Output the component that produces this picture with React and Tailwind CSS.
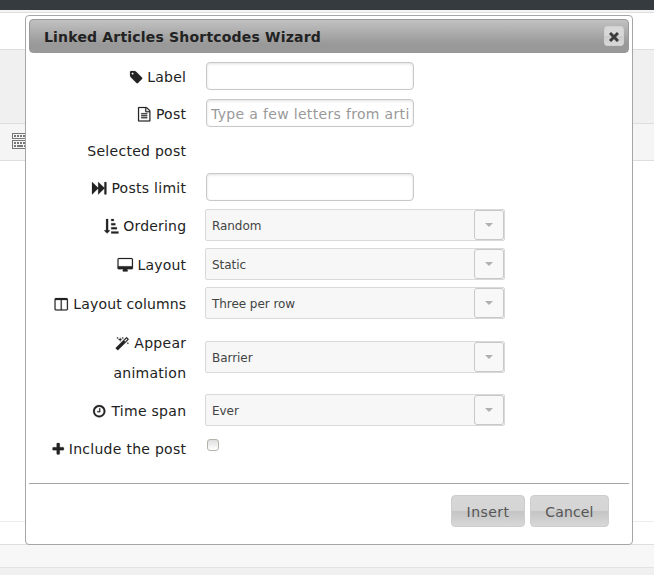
const ICONS = {
  tag: { w: 1664, d: "M576 448q0-53-37.5-90.5t-90.5-37.5-90.5 37.5-37.5 90.5 37.5 90.5 90.5 37.5 90.5-37.5 37.5-90.5zm1067 576q0 53-37 90l-491 492q-39 37-91 37-53 0-90-37l-715-716q-38-37-64.5-101t-26.5-117v-416q0-52 38-90t90-38h416q53 0 117 26.5t102 64.5l715 714q37 39 37 91z" },
  file: { w: 1792, d: "M1596 380q28 28 48 76t20 88v1152q0 40-28 68t-68 28h-1344q-40 0-68-28t-28-68v-1600q0-40 28-68t68-28h896q40 0 88 20t76 48zm-444-244v376h376q-10-29-22-41l-313-313q-12-12-41-22zm384 1528v-1024h-416q-40 0-68-28t-28-68v-416h-768v1536h1280zm-1024-864q0-14 9-23t23-9h704q14 0 23 9t9 23v64q0 14-9 23t-23 9h-704q-14 0-23-9t-9-23v-64zm736 224q14 0 23 9t9 23v64q0 14-9 23t-23 9h-704q-14 0-23-9t-9-23v-64q0-14 9-23t23-9h704zm0 256q14 0 23 9t9 23v64q0 14-9 23t-23 9h-704q-14 0-23-9t-9-23v-64q0-14 9-23t23-9h704z" },
  forward: { w: 1792, d: "M45 1651q-19 19-32 13t-13-32v-1472q0-26 13-32t32 13l710 710q9 9 13 19v-710q0-26 13-32t32 13l710 710q9 9 13 19v-678q0-26 19-45t45-19h128q26 0 45 19t19 45v1408q0 26-19 45t-45 19h-128q-26 0-45-19t-19-45v-678q-4 10-13 19l-710 710q-19 19-32 13t-13-32v-710q-4 10-13 19z" },
  sort: { w: 1792, d: "M736 1440q0 12-10 24l-319 319q-10 9-23 9-12 0-23-9l-320-320q-15-16-7-35 8-20 30-20h192v-1376q0-14 9-23t23-9h192q14 0 23 9t9 23v1376h192q14 0 23 9t9 23zM896 1536h896v256h-896zM896 1024h704v256h-704zM896 512h512v256h-512zM896 0h320v256h-320z" },
  desktop: { w: 1920, d: "M1728 992v-832q0-13-9.5-22.5t-22.5-9.5h-1600q-13 0-22.5 9.5t-9.5 22.5v832q0 13 9.5 22.5t22.5 9.5h1600q13 0 22.5-9.5t9.5-22.5zm128-832v1088q0 66-47 113t-113 47h-544q0 37 16 77.5t32 71 16 43.5q0 26-19 45t-45 19h-512q-26 0-45-19t-19-45q0-14 16-44t32-70 16-78h-544q-66 0-113-47t-47-113v-1088q0-66 47-113t113-47h1600q66 0 113 47t47 113z" },
  columns: { w: 1792, d: "M224 1536h608v-1152h-640v1120q0 13 9.5 22.5t22.5 9.5zm1376-32v-1120h-640v1152h608q13 0 22.5-9.5t9.5-22.5zm128-1216v1216q0 66-47 113t-113 47h-1344q-66 0-113-47t-47-113v-1216q0-66 47-113t113-47h1344q66 0 113 47t47 113z" },
  magic: { w: 1792, d: "M1254 581l293-293-107-107-293 293zm447-293q0 27-18 45l-1286 1286q-18 18-45 18t-45-18l-198-198q-18-18-18-45t18-45l1286-1286q18-18 45-18t45 18l198 198q18 18 18 45zm-1351-190l98 30-98 30-30 98-30-98-98-30 98-30 30-98zm350 162l196 60-196 60-60 196-60-196-196-60 196-60 60-196zm930 478l98 30-98 30-30 98-30-98-98-30 98-30 30-98zm-640-640l98 30-98 30-30 98-30-98-98-30 98-30 30-98z" },
  clock: { w: 1792, d: "M1024 544v448q0 14-9 23t-23 9h-320q-14 0-23-9t-9-23v-64q0-14 9-23t23-9h224v-352q0-14 9-23t23-9h64q14 0 23 9t9 23zm416 352q0-148-73-273t-198-198-273-73-273 73-198 198-73 273 73 273 198 198 273 73 273-73 198-198 73-273zm224 0q0 209-103 385.5t-279.5 279.5-385.5 103-385.5-103-279.5-279.5-103-385.5 103-385.5 279.5-279.5 385.5-103 385.5 103 279.5 279.5 103 385.5z" },
  plus: { w: 1664, d: "M1600 736v192q0 40-28 68t-68 28h-416v416q0 40-28 68t-68 28h-192q-40 0-68-28t-28-68v-416h-416q-40 0-68-28t-28-68v-192q0-40 28-68t68-28h416v-416q0-40 28-68t68-28h192q40 0 68 28t28 68v416h416q40 0 68 28t28 68z" },
};

function Icon({ name }) {
  const { w, d } = ICONS[name];
  return (
    <svg
      viewBox={`0 0 ${w} 1792`}
      style={{ width: w / 124 }}
      className="mr-[4.5px] inline-block h-[14.45px] overflow-visible align-[-3px]"
      fill="#222"
      stroke="#222"
      strokeWidth="24"
      aria-hidden="true"
    >
      <path d={d} />
    </svg>
  );
}

function Row({ label, icon, height = "h-[37px]", tracking = "tracking-[0.28px]", children }) {
  return (
    <div className={`flex items-center ${height}`}>
      <div className={`w-[157.3px] shrink-0 pl-3 text-right leading-[30px] ${tracking}`}>
        {icon && <Icon name={icon} />}
        {label}
      </div>
      {children}
    </div>
  );
}

function TextField({ placeholder }) {
  return (
    <input
      type="text"
      placeholder={placeholder}
      className="mb-0.5 ml-[19.7px] h-7 w-52 rounded-[4px] border border-[#c8c8c8] bg-white px-1 pt-0.5 tracking-[0.33px] shadow-[inset_0_1px_3px_rgba(0,0,0,0.12)] placeholder:text-[#999] placeholder:opacity-100"
    />
  );
}

function Select({ value, shift = "mb-0.5" }) {
  return (
    <button
      type="button"
      className={`ml-[18.7px] flex h-8 w-[300px] items-center justify-between rounded-[2px] border border-[#d9d9d9] bg-[#f7f7f7] pl-1.5 text-xs text-[#444] ${shift}`}
    >
      <span className="pt-0.5 tracking-[-0.05px]">{value}</span>
      <span className="flex h-[30px] w-[30px] items-center justify-center rounded-[3px] border border-[#c8c8c8] bg-[#f8f8f8]">
        <svg width="8" height="4" viewBox="0 0 8 4" fill="#b0b0b0">
          <path d="M0 0h8L4 4z" />
        </svg>
      </span>
    </button>
  );
}

function DialogButton({ width, children }) {
  return (
    <button
      type="button"
      className={`h-8 rounded-[4px] border border-[#cdcdcd] bg-[linear-gradient(#d7d7d7_0%,#d5d5d5_48%,#c4c4c4_52%,#d8d8d8_100%)] pt-0.5 text-[#555] ${width}`}
    >
      {children}
    </button>
  );
}

function Backdrop() {
  return (
    <div className="flex h-[575px] flex-col bg-[#f0f0f0]">
      <div className="h-2.5 bg-[#363b3f]" />
      <div className="h-[3px] border-b border-[#dedede] bg-[#f5f5f5]" />
      <div className="h-[37px] border-b border-[#ddd] bg-white" />
      <div className="h-[74px] border-b border-[#dedede] bg-[#f0f0f0]" />
      <div className="h-[37px] border-b border-[#dedede] bg-[#f5f5f5] pt-[9px] pl-3">
        <svg width="18" height="16" viewBox="0 0 18 16" fill="none" stroke="#777" shapeRendering="crispEdges">
          <path d="M0.5 0.5h16v5h-16zM0.5 7.5h16v8h-16z" />
          <path d="M2 3h14M2 10h14" strokeWidth="2" strokeDasharray="2 1" />
          <path d="M2 13h2M5 13h6M12 13h3" strokeWidth="2" />
        </svg>
      </div>
      <div className="h-[361px] border-b border-[#ececec] bg-white" />
      <div className="h-[23px] border-b border-[#dedede] bg-white" />
      <div className="h-[23px] border-b border-[#e2e2e2] bg-[#f7f7f7]" />
    </div>
  );
}

export default function App() {
  return (
    <div className="relative h-[575px] w-[654px] overflow-hidden font-['DejaVu_Sans',sans-serif] text-sm text-[#222]">
      <Backdrop />
      <div className="absolute top-[15px] left-[25px] flex h-[530px] w-[608px] flex-col rounded-[4px] border border-[#a6a6a6] bg-white p-[3px]">
        <div className="flex h-[34px] shrink-0 items-center justify-between rounded-[4px] border border-[#999] bg-[linear-gradient(#c1c1c1,#999_75%,#999)] pr-1 pl-3.5">
          <h1 className="pt-0.5 font-bold tracking-[0.19px]">Linked Articles Shortcodes Wizard</h1>
          <button
            type="button"
            aria-label="Close"
            className="flex h-5 w-5 items-center justify-center rounded-[3px] border border-[#d0d0d0] bg-[linear-gradient(#d8d8d8_50%,#cbcbcb_50%,#d8d8d8)]"
          >
            <svg className="mt-px" width="10" height="10" viewBox="0 0 10 10" stroke="#3c3c3c" strokeWidth="3">
              <path d="M1 1l8 8M9 1L1 9" />
            </svg>
          </button>
        </div>
        <div className="flex h-[430px] shrink-0 flex-col pt-[5px]">
          <Row icon="tag" label="Label"><TextField /></Row>
          <Row icon="file" label="Post"><TextField placeholder="Type a few letters from article title" /></Row>
          <Row label="Selected post" />
          <Row icon="forward" label="Posts limit"><TextField /></Row>
          <Row icon="sort" label="Ordering" height="h-[39px]" tracking="tracking-[0.2px]"><Select value="Random" /></Row>
          <Row icon="desktop" label="Layout" height="h-[39px]" tracking="tracking-[0.2px]"><Select value="Static" /></Row>
          <Row icon="columns" label="Layout columns" height="h-[39px]" tracking="tracking-[0.15px]"><Select value="Three per row" /></Row>
          <Row icon="magic" label="Appear animation" height="h-[68px]" tracking="tracking-[0.28px] pt-0.5"><Select value="Barrier" shift="mb-0" /></Row>
          <Row icon="clock" label="Time span" height="h-[39px]"><Select value="Ever" /></Row>
          <Row icon="plus" label="Include the post">
            <input
              type="checkbox"
              className="mb-[7px] ml-[20.7px] h-3 w-3 appearance-none rounded-[3px] border border-[#b4b4ac] bg-[linear-gradient(#dedede,#fff)]"
            />
          </Row>
        </div>
        <div className="flex gap-[5px] border-t border-[#a6a6a6] pt-[11px] pl-[422px]">
          <DialogButton width="w-[74px] tracking-[0.45px]">Insert</DialogButton>
          <DialogButton width="w-[79px] tracking-[0.15px]">Cancel</DialogButton>
        </div>
      </div>
    </div>
  );
}
